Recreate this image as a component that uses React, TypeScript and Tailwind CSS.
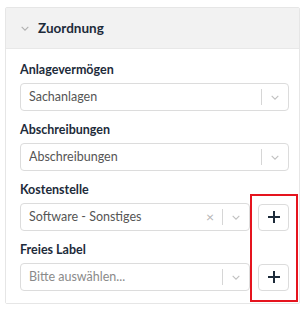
import React from "react";

const Chevron = ({ className }: { className?: string }) => (
  <svg viewBox="0 0 12 8" className={className} fill="none" stroke="currentColor" strokeWidth="1.3">
    <path d="M2 2l4 4 4-4" />
  </svg>
);

const Plus = () => (
  <svg viewBox="0 0 14 14" className="w-[14px] h-[14px]" fill="none" stroke="#1d2b3a" strokeWidth="2">
    <path d="M7 1v12M1 7h12" />
  </svg>
);

type SelectProps = { value: string; placeholder?: boolean; clearable?: boolean };

const Select: React.FC<SelectProps> = ({ value, placeholder, clearable }) => (
  <div className="flex-1 min-w-0 h-[28px] flex items-center border border-[#dcdcdc] rounded-[4px] bg-white pl-[8px]">
    <span className={`flex-1 text-[12.5px] truncate ${placeholder ? "text-[#8a8a8a]" : "text-[#555]"}`}>{value}</span>
    {clearable && <span className="text-[#b5b5b5] text-[14px] leading-none mr-[8px]">×</span>}
    <div className="w-px h-[16px] bg-[#d6d6d6]" />
    <div className="w-[26px] flex justify-center text-[#c0c0c0]">
      <Chevron className="w-[10px] h-[7px]" />
    </div>
  </div>
);

const Field: React.FC<{ label: string; children: React.ReactNode }> = ({ label, children }) => (
  <div className="flex flex-col gap-[5px]">
    <div className="text-[12.5px] leading-[16px] font-bold text-[#1d2b3a]">{label}</div>
    <div className="flex items-center gap-[8px]">{children}</div>
  </div>
);

const AddButton = () => (
  <div className="w-[31px] h-[27px] flex items-center justify-center border border-[#dcdcdc] rounded-[4px] bg-white">
    <Plus />
  </div>
);

export default function App() {
  return (
    <div className="w-[305px] h-[311px] bg-white pt-[7px] pl-[5px] pr-[5px]" style={{ fontFamily: "Lato, 'Liberation Sans', sans-serif" }}>
      <div className="relative border border-[#e6e6e6] rounded-[2px]">
        <div className="h-[41px] bg-[#f2f2f2] flex items-center pl-[14px] gap-[8px] border-b border-[#e8e8e8]">
          <Chevron className="w-[10px] h-[7px] text-[#b0b0b0]" />
          <span className="text-[13.5px] font-bold text-[#1d2b3a]">Zuordnung</span>
        </div>
        <div className="bg-white pl-[14px] pr-[10px] pt-[13px] pb-[12px] flex flex-col gap-[11px]">
          <Field label="Anlagevermögen">
            <Select value="Sachanlagen" />
          </Field>
          <Field label="Abschreibungen">
            <Select value="Abschreibungen" />
          </Field>
          <Field label="Kostenstelle">
            <Select value="Software - Sonstiges" clearable />
            <AddButton />
          </Field>
          <Field label="Freies Label">
            <Select value="Bitte auswählen..." placeholder />
            <AddButton />
          </Field>
        </div>
        <div className="absolute left-[244px] top-[186px] w-[48px] h-[108px] border-2 border-[#e5141e]" />
      </div>
    </div>
  );
}
